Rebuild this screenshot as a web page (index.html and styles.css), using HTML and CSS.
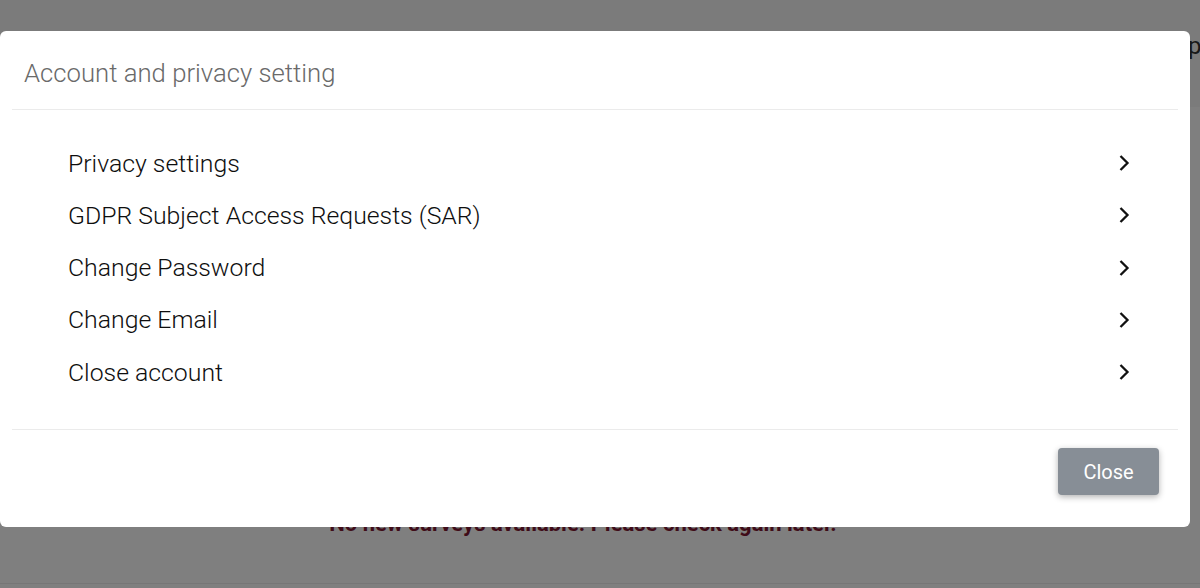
FILE: index.html
```html
<!DOCTYPE html>
<html lang="en">
<head>
  <meta charset="UTF-8">
  <title>Account and privacy setting</title>
  <link rel="stylesheet" href="styles.css">
</head>
<body>
  <div class="page">
    <div class="page-top">p</div>
    <div class="page-main">
      <p class="no-surveys">No new surveys available. Please check again later.</p>
    </div>
    <div class="page-bottom"></div>
  </div>

  <div class="backdrop">
    <div class="modal">
      <div class="modal-header">Account and privacy setting</div>

      <ul class="modal-list">
        <li class="item"><span>Privacy settings</span>
          <svg class="chev" viewBox="0 0 12 18" width="12" height="18"><path d="M2.5 2 L9.5 9 L2.5 16"/></svg></li>
        <li class="item"><span>GDPR Subject Access Requests (SAR)</span>
          <svg class="chev" viewBox="0 0 12 18" width="12" height="18"><path d="M2.5 2 L9.5 9 L2.5 16"/></svg></li>
        <li class="item"><span>Change Password</span>
          <svg class="chev" viewBox="0 0 12 18" width="12" height="18"><path d="M2.5 2 L9.5 9 L2.5 16"/></svg></li>
        <li class="item"><span>Change Email</span>
          <svg class="chev" viewBox="0 0 12 18" width="12" height="18"><path d="M2.5 2 L9.5 9 L2.5 16"/></svg></li>
        <li class="item"><span>Close account</span>
          <svg class="chev" viewBox="0 0 12 18" width="12" height="18"><path d="M2.5 2 L9.5 9 L2.5 16"/></svg></li>
      </ul>

      <div class="modal-footer">
        <button type="button" class="btn-close">Close</button>
      </div>
    </div>
  </div>
</body>
</html>
```

FILE: styles.css
```css
html, body {
  margin: 0;
  height: 100%;
}
body {
  font-family: Roboto, 'Liberation Sans', sans-serif;
  background: #fff;
  overflow: hidden;
  position: relative;
}
.page {
  height: 588px;
  display: flex;
  flex-direction: column;
}
.page-top {
  height: 107px;
  background: #f7f7f7;
  padding: 32px 0 0 1188px;
  box-sizing: border-box;
  font-size: 24px;
  color: #333;
  white-space: nowrap;
}
.page-main {
  flex: 1;
  display: flex;
  align-items: flex-end;
  justify-content: center;
  padding: 0 34px 47px 0;
}
.no-surveys {
  margin: 0;
  font-size: 22px;
  font-weight: bold;
  color: #7e1832;
}
.page-bottom {
  height: 4px;
  border-top: 1px solid #ececec;
}

/* modal */
.backdrop {
  position: absolute;
  inset: 0;
  background: rgba(0, 0, 0, 0.5);
  padding-top: 31px;
}
.modal {
  width: 1190px;
  height: 496px;
  background: #fff;
  border-radius: 6px;
  display: flex;
  flex-direction: column;
  box-sizing: border-box;
}
.modal-header {
  margin: 0 12px;
  padding: 27px 12px 0;
  height: 79px;
  box-sizing: border-box;
  border-bottom: 1px solid #ebebeb;
  font-size: 25.7px;
  font-weight: 300;
  color: #6a6a6a;
}
.modal-list {
  list-style: none;
  margin: 0 12px;
  padding: 27px 48px 31px 56px;
  border-bottom: 1px solid #ebebeb;
}
.item {
  height: 52.25px;
  display: flex;
  align-items: center;
  justify-content: space-between;
  font-size: 24.8px;
  font-weight: 300;
  color: #0e0e0e;
}
.chev path {
  fill: none;
  stroke: #111;
  stroke-width: 2.3;
}
.modal-footer {
  display: flex;
  justify-content: flex-end;
  padding: 18px 31px 0;
}
.btn-close {
  width: 101px;
  height: 47px;
  border: none;
  border-radius: 4px;
  background: #878e96;
  color: #fff;
  font-family: Roboto, 'Liberation Sans', sans-serif;
  font-size: 20px;
  box-shadow: 0 2px 6px rgba(0, 0, 0, 0.3);
  cursor: pointer;
}
```
